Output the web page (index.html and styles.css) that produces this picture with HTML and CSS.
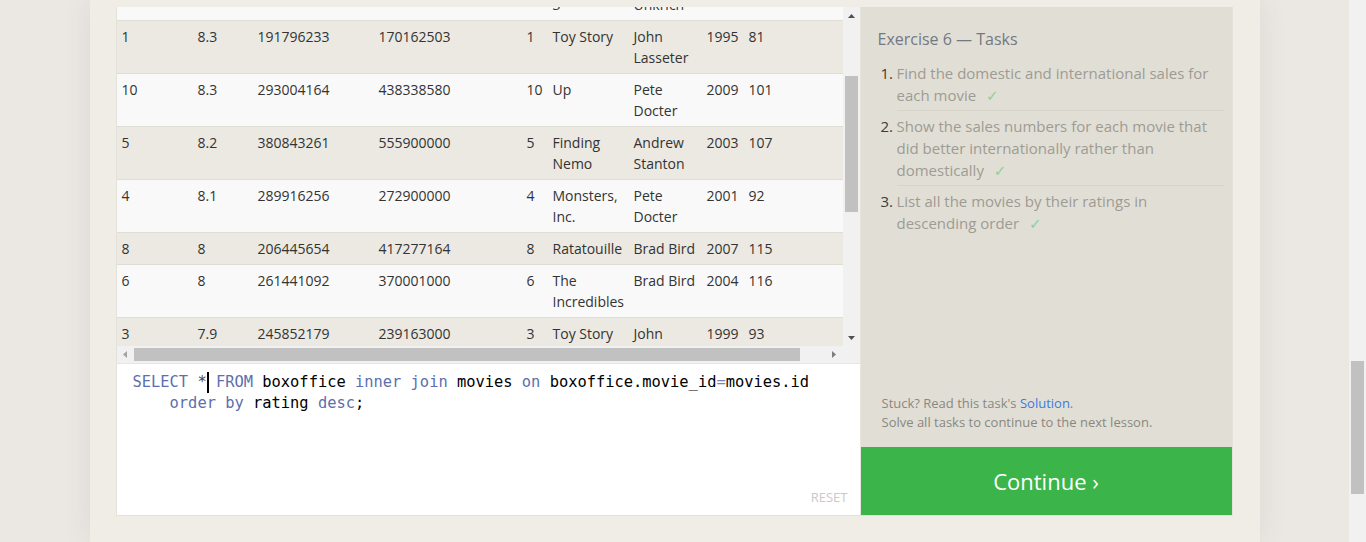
FILE: index.html
```html
<!DOCTYPE html>
<html lang="en">
<head>
<meta charset="utf-8">
<title>SQL Lesson 6: Multi-table queries with JOINs</title>
<link rel="stylesheet" href="styles.css">
</head>
<body>
<div class="page">
  <div class="lesson">
    <div class="exercise">
      <div class="workspace">
        <div class="results">
          <div class="table-view">
            <table class="grid">
              <colgroup>
                <col class="w-movie-id">
                <col class="w-rating">
                <col class="w-domestic">
                <col class="w-international">
                <col class="w-id">
                <col class="w-title">
                <col class="w-director">
                <col class="w-year">
                <col class="w-length">
              </colgroup>
              <thead>
                <tr><th>movie_id</th><th>rating</th><th>domestic_sales</th><th>international_sales</th><th>id</th><th>title</th><th>director</th><th>year</th><th>length_minutes</th></tr>
              </thead>
              <tbody>
                <tr><td>9</td><td>8.5</td><td>223808164</td><td>297503696</td><td>9</td><td>WALL-E</td><td>Andrew Stanton</td><td>2008</td><td>104</td></tr>
                <tr><td>11</td><td>8.4</td><td>415004880</td><td>648167031</td><td>11</td><td>Toy Story 3</td><td>Lee Unkrich</td><td>2010</td><td>103</td></tr>
                <tr class="row-anchor"><td>1</td><td>8.3</td><td>191796233</td><td>170162503</td><td>1</td><td>Toy Story</td><td>John Lasseter</td><td>1995</td><td>81</td></tr>
                <tr><td>10</td><td>8.3</td><td>293004164</td><td>438338580</td><td>10</td><td>Up</td><td>Pete Docter</td><td>2009</td><td>101</td></tr>
                <tr><td>5</td><td>8.2</td><td>380843261</td><td>555900000</td><td>5</td><td>Finding Nemo</td><td>Andrew Stanton</td><td>2003</td><td>107</td></tr>
                <tr><td>4</td><td>8.1</td><td>289916256</td><td>272900000</td><td>4</td><td>Monsters, Inc.</td><td>Pete Docter</td><td>2001</td><td>92</td></tr>
                <tr><td>8</td><td>8</td><td>206445654</td><td>417277164</td><td>8</td><td>Ratatouille</td><td>Brad Bird</td><td>2007</td><td>115</td></tr>
                <tr><td>6</td><td>8</td><td>261441092</td><td>370001000</td><td>6</td><td>The Incredibles</td><td>Brad Bird</td><td>2004</td><td>116</td></tr>
                <tr><td>3</td><td>7.9</td><td>245852179</td><td>239163000</td><td>3</td><td>Toy Story 2</td><td>John Lasseter</td><td>1999</td><td>93</td></tr>
                <tr><td>14</td><td>7.4</td><td>268492764</td><td>475066843</td><td>14</td><td>Monsters University</td><td>Dan Scanlon</td><td>2013</td><td>110</td></tr>
                <tr><td>7</td><td>7.2</td><td>244082982</td><td>217900167</td><td>7</td><td>Cars</td><td>John Lasseter</td><td>2006</td><td>117</td></tr>
                <tr><td>2</td><td>7.2</td><td>162798565</td><td>200600000</td><td>2</td><td>A Bug's Life</td><td>John Lasseter</td><td>1998</td><td>95</td></tr>
                <tr><td>13</td><td>7.2</td><td>237283207</td><td>301700000</td><td>13</td><td>Brave</td><td>Brenda Chapman</td><td>2012</td><td>102</td></tr>
                <tr><td>12</td><td>6.4</td><td>191452396</td><td>368400000</td><td>12</td><td>Cars 2</td><td>John Lasseter</td><td>2011</td><td>120</td></tr>
              </tbody>
            </table>
          </div>
          <div class="vbar">
            <span class="sb-btn"><svg class="arrow dark" width="7" height="4" viewBox="0 0 7 4"><path d="M0 4H7L3.5 0z"/></svg></span>
            <div class="vtrack"><div class="vthumb"></div></div>
            <span class="sb-btn"><svg class="arrow dark" width="7" height="4" viewBox="0 0 7 4"><path d="M0 0H7L3.5 4z"/></svg></span>
          </div>
          <div class="hbar">
            <span class="sb-btn"><svg class="arrow light" width="4" height="7" viewBox="0 0 4 7"><path d="M4 0V7L0 3.5z"/></svg></span>
            <div class="htrack"><div class="hthumb"></div></div>
            <span class="sb-btn"><svg class="arrow mid" width="4" height="7" viewBox="0 0 4 7"><path d="M0 0V7L4 3.5z"/></svg></span>
          </div>
          <div class="sb-corner"></div>
        </div>
        <div class="editor">
          <pre class="code"><span class="kw">SELECT</span> <span class="op">*</span><span class="cursor"></span> <span class="kw">FROM</span> boxoffice <span class="kw">inner</span> <span class="kw">join</span> movies <span class="kw">on</span> boxoffice.movie_id<span class="eq">=</span>movies.id
    <span class="kw">order</span> <span class="kw">by</span> rating <span class="kw">desc</span>;</pre>
          <div class="reset">RESET</div>
        </div>
      </div>
      <aside class="tasks">
        <div class="tasks-body">
          <h3 class="tasks-title">Exercise 6 — Tasks</h3>
          <ol class="task-list">
            <li class="task"><span class="task-num">1.</span><span class="task-text">Find the domestic and international sales for each movie <span class="check">✓</span></span></li>
            <li class="task"><span class="task-num">2.</span><span class="task-text">Show the sales numbers for each movie that did better internationally rather than domestically <span class="check">✓</span></span></li>
            <li class="task"><span class="task-num">3.</span><span class="task-text">List all the movies by their ratings in descending order <span class="check">✓</span></span></li>
          </ol>
          <div class="hint">
            <p>Stuck? Read this task's <a class="solution" href="#">Solution</a>.</p>
            <p>Solve all tasks to continue to the next lesson.</p>
          </div>
        </div>
        <a class="continue" href="#">Continue ›</a>
      </aside>
    </div>
  </div>
</div>
<div class="page-scrollbar"><div class="page-thumb"></div></div>
<script src="script.js"></script>
</body>
</html>
```
FILE: styles.css
```css
html, body {
  margin: 0;
  height: 542px;
  overflow: hidden;
}
body {
  display: flex;
  background: #ebe7e3;
  font-family: "Open Sans", "Noto Sans", sans-serif;
  color: #333;
}
.page {
  flex: 1;
  min-width: 0;
  display: flex;
  justify-content: center;
}
.lesson {
  width: 1170px;
  box-sizing: border-box;
  padding: 7px 27px 0 26px;
  background: #efede6;
  box-shadow: 0 0 28px rgba(90, 80, 70, 0.09);
}
.exercise {
  display: grid;
  grid-template-columns: 743px 372px;
  height: 509px;
  box-sizing: border-box;
  border: 1px solid #e3e1da;
  border-top: 0;
}
.workspace {
  display: flex;
  flex-direction: column;
  min-width: 0;
}
.results {
  display: grid;
  grid-template-columns: 726px 17px;
  grid-template-rows: 339px 17px;
  flex: none;
}
.table-view {
  overflow: hidden;
  background: #f9f9f9;
}
.vbar,
.hbar {
  display: flex;
  background: #f1f1f1;
}
.vbar {
  flex-direction: column;
}
.sb-btn {
  width: 17px;
  height: 17px;
  flex: none;
  display: flex;
  align-items: center;
  justify-content: center;
}
.arrow.dark { fill: #505050; }
.arrow.mid { fill: #7d7d7d; }
.arrow.light { fill: #a3a3a3; }
.vtrack,
.htrack {
  flex: 1;
  display: flex;
}
.vtrack {
  flex-direction: column;
}
.vthumb {
  margin: 52px 2px 0;
  height: 136px;
  background: #c1c1c1;
}
.htrack {
  align-items: stretch;
}
.hthumb {
  margin: 2px 0;
  width: 666px;
  background: #c1c1c1;
}
.sb-corner {
  background: #f1f1f1;
}
.grid {
  width: 754px;
  table-layout: fixed;
  border-collapse: collapse;
  font-size: 14px;
  line-height: 21px;
  color: #333;
}
.w-movie-id { width: 76px; }
.w-rating { width: 60px; }
.w-domestic { width: 121px; }
.w-international { width: 148px; }
.w-id { width: 26px; }
.w-title { width: 81px; }
.w-director { width: 73px; }
.w-year { width: 42px; }
.w-length { width: 127px; }
.grid th,
.grid td {
  padding: 5px 4px 5px 5px;
  text-align: left;
  vertical-align: top;
  border-bottom: 1px solid #dfddd6;
}
.grid th {
  font-weight: 600;
  background: #f9f9f9;
}
.grid tbody tr:nth-child(odd) { background: #ebe9e2; }
.grid tbody tr:nth-child(even) { background: #f9f9f9; }
.editor {
  flex: 1;
  display: flex;
  flex-direction: column;
  background: #fff;
  border-top: 1px solid #e8e6e0;
  padding: 8px 12px 9px 16px;
  min-height: 0;
}
.code {
  flex: 1;
  margin: 0;
  font-family: "DejaVu Sans Mono", "Liberation Mono", monospace;
  font-size: 15.4px;
  line-height: 21px;
  color: #000;
  white-space: pre;
}
.kw { color: #5c6fae; }
.op { color: #3f4866; }
.eq { color: #7584c0; }
.cursor {
  display: inline-block;
  width: 0;
  height: 21px;
  border-left: 2px solid #000;
  margin-right: -2px;
  vertical-align: top;
}
.reset {
  align-self: flex-end;
  font-size: 13px;
  line-height: 18px;
  color: #c9c9c9;
}
.tasks {
  display: flex;
  flex-direction: column;
  border-left: 1px solid #e6e4dc;
  background: #e1dfd5;
}
.tasks-body {
  flex: 1;
  display: flex;
  flex-direction: column;
  padding: 21px 8px 15px 17px;
}
.tasks-title {
  margin: 0 0 8px;
  font-size: 16px;
  line-height: 22px;
  font-weight: 400;
  color: #737885;
}
.task-list {
  margin: 0;
  padding: 0 0 0 3px;
  list-style: none;
}
.task {
  display: flex;
}
.task-num {
  width: 16px;
  flex: none;
  padding-top: 4px;
  font-size: 15px;
  line-height: 22px;
  color: #3a3a3a;
}
.task-text {
  flex: 1;
  padding: 4px 0;
  border-bottom: 1px solid #d6d4cb;
  font-size: 15px;
  line-height: 22px;
  color: #9e9b94;
}
.task:last-child .task-text {
  border-bottom: 0;
}
.check {
  margin-left: 6px;
  color: #8fd09d;
  font-family: "DejaVu Sans", sans-serif;
  font-size: 15px;
  line-height: 0;
}
.hint {
  margin-top: auto;
  padding-left: 4px;
  font-size: 13px;
  line-height: 19px;
  color: #8a8781;
}
.hint p {
  margin: 0;
}
.solution {
  color: #3a7ae0;
  text-decoration: none;
}
.continue {
  height: 68px;
  flex: none;
  display: flex;
  align-items: center;
  justify-content: center;
  padding-bottom: 1px;
  box-sizing: border-box;
  background: #3bb54a;
  color: #fff;
  font-size: 22px;
  text-decoration: none;
}
.page-scrollbar {
  width: 17px;
  flex: none;
  display: flex;
  flex-direction: column;
  background: #f1f1f1;
}
.page-thumb {
  margin: 361px 2px 0;
  height: 133px;
  background: #c1c1c1;
}
```
FILE: script.js
```js
(function () {
  function place() {
    var box = document.querySelector('.table-view');
    var anchor = document.querySelector('.row-anchor');
    if (!box || !anchor) return;
    box.scrollLeft = 0;
    box.scrollTop = 0;
    var offset = anchor.getBoundingClientRect().top - box.getBoundingClientRect().top;
    box.scrollTop = offset - 14;
  }
  place();
  window.addEventListener('load', place);
})();
```
